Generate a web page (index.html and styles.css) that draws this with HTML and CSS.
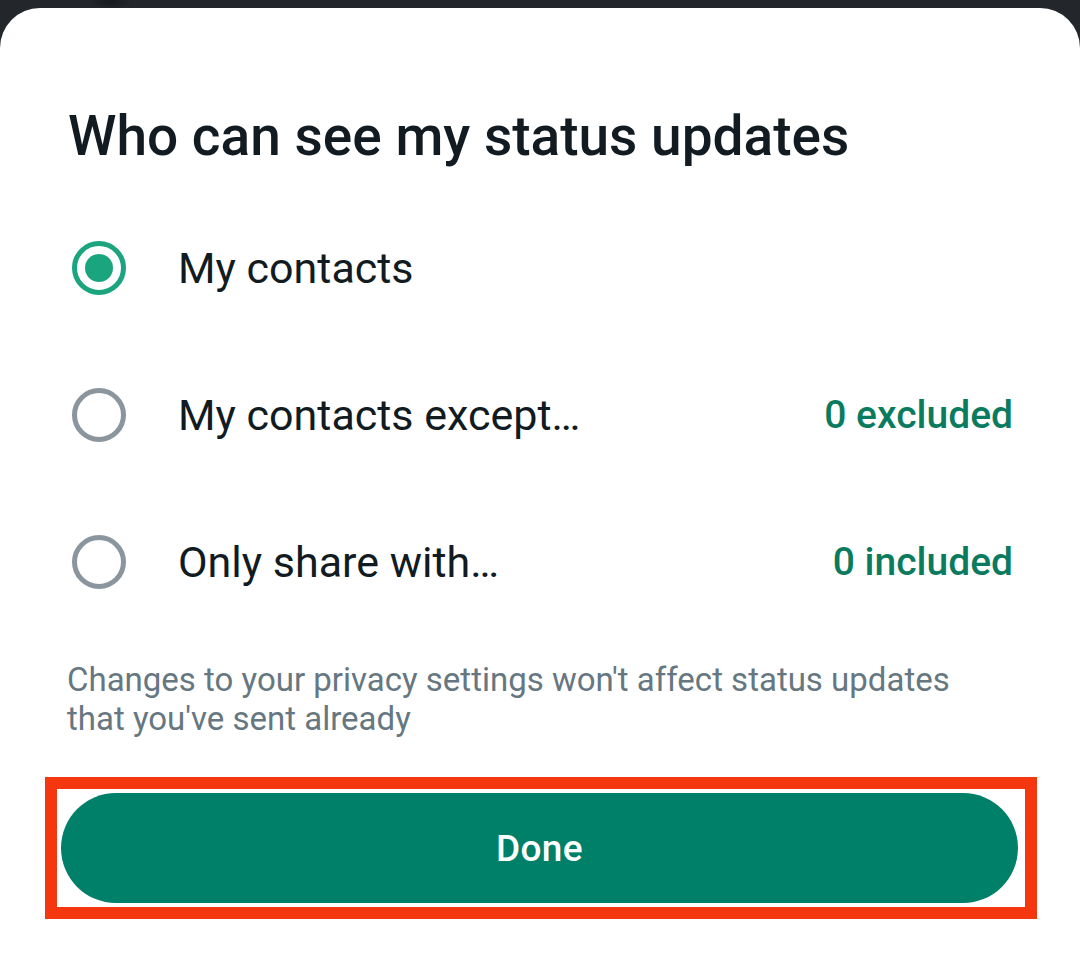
FILE: index.html
```html
<!DOCTYPE html>
<html lang="en">
<head>
    <meta charset="UTF-8">
    <meta name="viewport" content="width=device-width, initial-scale=1.0">
    <title>Status privacy</title>
    <link rel="stylesheet" href="styles.css">
</head>
<body>

<div class="sheet">
    <h1 class="sheet-title">Who can see my status updates</h1>

    <div class="option">
        <span class="radio checked"></span>
        <span class="option-label">My contacts</span>
    </div>

    <div class="option">
        <span class="radio"></span>
        <span class="option-label">My contacts except…</span>
        <span class="option-count">0 excluded</span>
    </div>

    <div class="option">
        <span class="radio"></span>
        <span class="option-label">Only share with…</span>
        <span class="option-count">0 included</span>
    </div>

    <p class="note">Changes to your privacy settings won't affect status updates that you've sent already</p>

    <div class="highlight">
        <button class="done-btn">Done</button>
    </div>
</div>

</body>
</html>
```

FILE: styles.css
```css
body {
    margin: 0;
    background: radial-gradient(ellipse 22px 8px at 110px 2px, #17191c, transparent), #23272b;
    font-family: Roboto, "Noto Sans", Arial, sans-serif;
}
.sheet {
    margin-top: 8px;
    min-height: calc(100vh - 8px);
    box-sizing: border-box;
    background-color: #fff;
    border-radius: 40px 40px 0 0;
    padding: 96px 67px 0 0;
}
.sheet-title {
    margin: 0 0 26px 68px;
    font-size: 55px;
    line-height: 64px;
    font-weight: 500;
    color: #111b21;
}
.option {
    display: flex;
    align-items: center;
    height: 147px;
    padding-left: 72px;
}
.radio {
    width: 54px;
    height: 54px;
    box-sizing: border-box;
    border: 5px solid #8a959d;
    border-radius: 50%;
    display: flex;
    align-items: center;
    justify-content: center;
    flex-shrink: 0;
}
.radio.checked {
    border-color: #1ba57f;
}
.radio.checked::after {
    content: "";
    width: 28px;
    height: 28px;
    border-radius: 50%;
    background-color: #1ba57f;
}
.option-label {
    flex: 1;
    margin-left: 52px;
    font-size: 43px;
    color: #111b21;
}
.option-count {
    font-size: 39px;
    font-weight: 500;
    color: #0a7b5e;
}
.note {
    margin: 25px 0 39px 67px;
    font-size: 33px;
    line-height: 39px;
    color: #667781;
}
.highlight {
    margin-left: 45px;
    width: 992px;
    box-sizing: border-box;
    border: 12px solid #f5370f;
    padding: 4px 7px 4px 4px;
}
.done-btn {
    display: block;
    width: 100%;
    height: 110px;
    border: none;
    border-radius: 55px;
    background-color: #008069;
    color: #fff;
    font-family: inherit;
    font-size: 37px;
    font-weight: 500;
    letter-spacing: 0.3px;
    cursor: pointer;
}
```
